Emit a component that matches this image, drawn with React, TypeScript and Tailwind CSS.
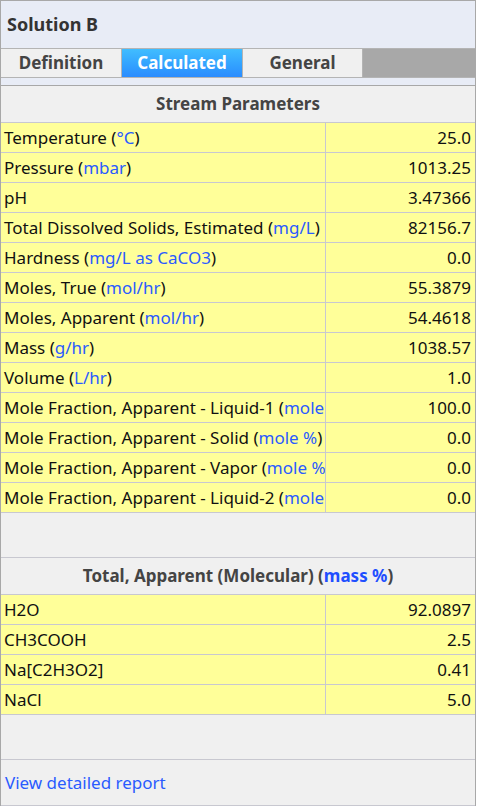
import React from 'react';

interface Row {
  label: string;
  unit?: string;
  value: string;
}

const streamRows: Row[] = [
  { label: 'Temperature', unit: '°C', value: '25.0' },
  { label: 'Pressure', unit: 'mbar', value: '1013.25' },
  { label: 'pH', value: '3.47366' },
  { label: 'Total Dissolved Solids, Estimated', unit: 'mg/L', value: '82156.7' },
  { label: 'Hardness', unit: 'mg/L as CaCO3', value: '0.0' },
  { label: 'Moles, True', unit: 'mol/hr', value: '55.3879' },
  { label: 'Moles, Apparent', unit: 'mol/hr', value: '54.4618' },
  { label: 'Mass', unit: 'g/hr', value: '1038.57' },
  { label: 'Volume', unit: 'L/hr', value: '1.0' },
  { label: 'Mole Fraction, Apparent - Liquid-1', unit: 'mole %', value: '100.0' },
  { label: 'Mole Fraction, Apparent - Solid', unit: 'mole %', value: '0.0' },
  { label: 'Mole Fraction, Apparent - Vapor', unit: 'mole %', value: '0.0' },
  { label: 'Mole Fraction, Apparent - Liquid-2', unit: 'mole %', value: '0.0' },
];

const molecularRows: Row[] = [
  { label: 'H2O', value: '92.0897' },
  { label: 'CH3COOH', value: '2.5' },
  { label: 'Na[C2H3O2]', value: '0.41' },
  { label: 'NaCl', value: '5.0' },
];

function DataRow({ row }: { row: Row }) {
  return (
    <div className="flex h-[30px] border-b border-[#c8c8d0] bg-[#ffff99] text-[17px] text-[#111]">
      <div className="w-[325px] shrink-0 overflow-hidden whitespace-nowrap border-r border-[#c8c8d0] pl-[3px] leading-[29px]">
        {row.label}
        {row.unit && (
          <>
            {' ('}
            <span className="text-[#2a5bff]">{row.unit}</span>
            {')'}
          </>
        )}
      </div>
      <div className="flex-1 pr-[4px] text-right leading-[29px]">{row.value}</div>
    </div>
  );
}

export default function App() {
  return (
    <div className="w-[477px] bg-white" style={{ fontFamily: '"Noto Sans", "Open Sans", sans-serif' }}>
      <div className="w-[476px] border-l border-r border-t border-[#a8a8a8] bg-[#e8ecf6]">
        {/* title */}
        <div className="flex h-[47px] items-center pl-[6px] text-[18px] font-bold text-[#333]">Solution B</div>

        {/* tabs */}
        <div className="flex h-[30px] border-y border-[#b4b4b4] text-[17px] font-bold">
          <div className="flex w-[121px] items-center justify-center border-r border-[#b4b4b4] bg-[#f0f0f0] text-[#444]">Definition</div>
          <div className="flex w-[121px] items-center justify-center border-r border-[#b4b4b4] bg-gradient-to-b from-[#41bdff] to-[#2b8cff] text-white">Calculated</div>
          <div className="flex w-[120px] items-center justify-center border-r border-[#b4b4b4] bg-[#f0f0f0] text-[#444]">General</div>
          <div className="flex-1 bg-[#a8a8a8]" />
        </div>

        <div className="h-[7px]" />

        <div className="border-t border-[#a8a8a8] bg-[#f0f0f0]">
          <div className="flex h-[37px] items-center justify-center border-b border-[#c8c8d0] text-[17px] font-bold text-[#444]">
            Stream Parameters
          </div>
          {streamRows.map((r) => (
            <DataRow key={r.label} row={r} />
          ))}

          <div className="h-[45px] border-b border-[#c8c8d0]" />

          <div className="flex h-[37px] items-center justify-center border-b border-[#c8c8d0] text-[17px] font-bold text-[#444]">
            Total, Apparent (Molecular) (<span className="text-[#1f4fff]">mass %</span>)
          </div>
          {molecularRows.map((r) => (
            <DataRow key={r.label} row={r} />
          ))}

          <div className="h-[45px] border-b border-[#c8c8d0]" />

          <div className="flex h-[46px] items-center border-b border-[#c8c8d0] pl-[4px] text-[17px] text-[#2a5bff]">
            View detailed report
          </div>
        </div>
      </div>
    </div>
  );
}
